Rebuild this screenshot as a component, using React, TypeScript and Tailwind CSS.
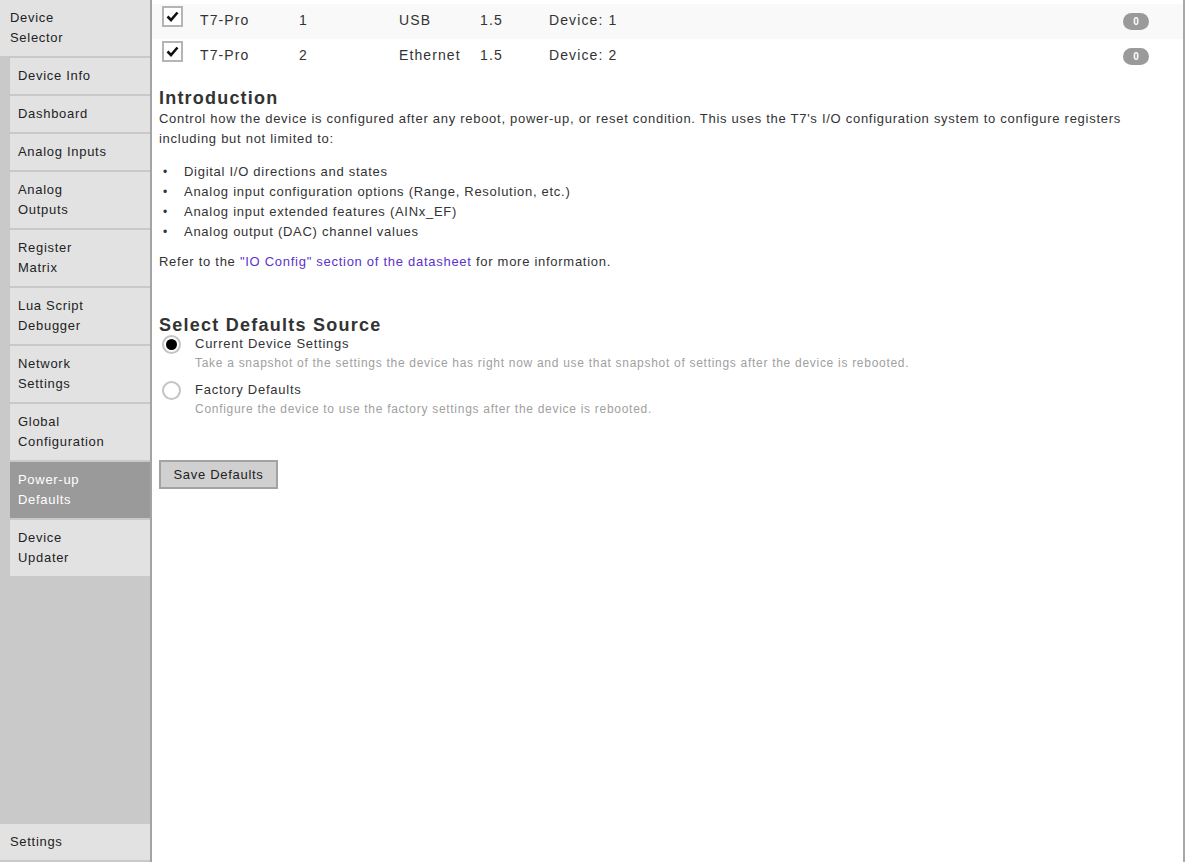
import React from "react";

const font = { fontFamily: '"Liberation Sans", Arial, sans-serif' };

function NavItem({ lines, active, full }: { lines: string[]; active?: boolean; full?: boolean }) {
  return (
    <div
      className={`${full ? "px-[10px]" : "ml-[10px] px-[8px]"} ${active ? "bg-[#9a9a9a] text-white" : "bg-[#e2e2e2] text-[#222]"} py-[8px] text-[13px] leading-[20px] tracking-[0.7px]`}
    >
      {lines.map((l) => (
        <div key={l}>{l}</div>
      ))}
    </div>
  );
}

function Check() {
  return (
    <div className="w-[21px] h-[21px] border-2 border-[#b4b4b4] bg-white flex items-center justify-center">
      <svg width="13" height="11" viewBox="0 0 13 11">
        <path d="M1.5 5.5 L5 9 L11.5 1.5" fill="none" stroke="#111" strokeWidth="2.6" />
      </svg>
    </div>
  );
}

function Row({ bg, n, conn }: { bg: string; n: string; conn: string }) {
  return (
    <div className={`${bg} h-[35px] flex items-start text-[14px] leading-[20px] tracking-[1.1px] text-[#333]`}>
      <div className="w-[48px] pl-[10px] pt-[2px]">
        <Check />
      </div>
      <div className="w-[99px] pt-[6px]">T7-Pro</div>
      <div className="w-[100px] pt-[6px]">{n}</div>
      <div className="w-[81px] pt-[6px]">{conn}</div>
      <div className="w-[69px] pt-[6px]">1.5</div>
      <div className="flex-1 pt-[6px]">Device: {n}</div>
      <div className="w-[60px] pt-[9px]">
        <div className="w-[26px] h-[17px] rounded-full bg-[#9a9a9a] text-white text-[10px] leading-[17px] font-bold text-center tracking-normal">
          0
        </div>
      </div>
    </div>
  );
}

function Radio({ checked }: { checked?: boolean }) {
  return (
    <div className="w-[19px] h-[19px] rounded-full border-2 border-[#c4c4c4] bg-white flex items-center justify-center">
      {checked && <div className="w-[11px] h-[11px] rounded-full bg-black" />}
    </div>
  );
}

const body = "text-[13px] leading-[20px] tracking-[0.72px]";

export default function App() {
  return (
    <div className="w-[1185px] h-[862px] flex overflow-hidden bg-white" style={font}>
      <div className="w-[152px] h-full flex flex-col bg-[#c9c9c9] border-r-2 border-[#a3a3a3] shrink-0">
        <div className="flex flex-col gap-[2px]">
          <NavItem lines={["Device", "Selector"]} full />
          <NavItem lines={["Device Info"]} />
          <NavItem lines={["Dashboard"]} />
          <NavItem lines={["Analog Inputs"]} />
          <NavItem lines={["Analog", "Outputs"]} />
          <NavItem lines={["Register", "Matrix"]} />
          <NavItem lines={["Lua Script", "Debugger"]} />
          <NavItem lines={["Network", "Settings"]} />
          <NavItem lines={["Global", "Configuration"]} />
          <NavItem lines={["Power-up", "Defaults"]} active />
          <NavItem lines={["Device", "Updater"]} />
        </div>
        <div className="flex-1" />
        <div className="mb-[2px] bg-[#e2e2e2] px-[10px] py-[8px] text-[13px] leading-[20px] tracking-[0.7px] text-[#222]">
          Settings
        </div>
      </div>
      <div className="flex-1 h-full border-r-2 border-[#a8a8a8] text-[#333]">
        <div className="pt-[4px]">
          <Row bg="bg-[#f9f9f9]" n="1" conn="USB" />
          <Row bg="bg-white" n="2" conn="Ethernet" />
        </div>
        <div className="pl-[7px] pr-[20px]">
          <h2 className="mt-[13px] text-[18px] leading-[22px] font-bold tracking-[1.2px] text-[#333]">Introduction</h2>
          <p className={body}>
            Control how the device is configured after any reboot, power-up, or reset condition. This uses the T7's I/O
            configuration system to configure registers including but not limited to:
          </p>
          <ul className={`mt-[13px] ${body}`}>
            {[
              "Digital I/O directions and states",
              "Analog input configuration options (Range, Resolution, etc.)",
              "Analog input extended features (AINx_EF)",
              "Analog output (DAC) channel values",
            ].map((t) => (
              <li key={t} className="flex">
                <span className="w-[25px] pl-[4px] text-[12px]">•</span>
                <span>{t}</span>
              </li>
            ))}
          </ul>
          <p className={`mt-[10px] ${body}`}>
            Refer to the <span className="text-[#5b32cc]">"IO Config" section of the datasheet</span> for more information.
          </p>
          <h2 className="mt-[43px] text-[18px] leading-[20px] font-bold tracking-[1.25px] text-[#333]">
            Select Defaults Source
          </h2>
          <div className="flex flex-col">
            <div className="flex items-start">
              <div className="w-[36px] pl-[3px] pt-[0px]">
                <Radio checked />
              </div>
              <div>
                <div className="text-[13px] leading-[18px] tracking-[0.74px]">Current Device Settings</div>
                <div className="text-[12px] leading-[20px] tracking-[0.71px] text-[#a0a0a0]">
                  Take a snapshot of the settings the device has right now and use that snapshot of settings after the
                  device is rebooted.
                </div>
              </div>
            </div>
            <div className="flex items-start mt-[8px]">
              <div className="w-[36px] pl-[3px] pt-[0px]">
                <Radio />
              </div>
              <div>
                <div className="text-[13px] leading-[18px] tracking-[0.74px]">Factory Defaults</div>
                <div className="text-[12px] leading-[20px] tracking-[0.71px] text-[#a0a0a0]">
                  Configure the device to use the factory settings after the device is rebooted.
                </div>
              </div>
            </div>
          </div>
          <button className="mt-[41px] w-[119px] h-[29px] bg-[#d0d0d0] border-2 border-[#a3a3a3] text-[13px] tracking-[0.7px] text-[#222]">
            Save Defaults
          </button>
        </div>
      </div>
    </div>
  );
}
